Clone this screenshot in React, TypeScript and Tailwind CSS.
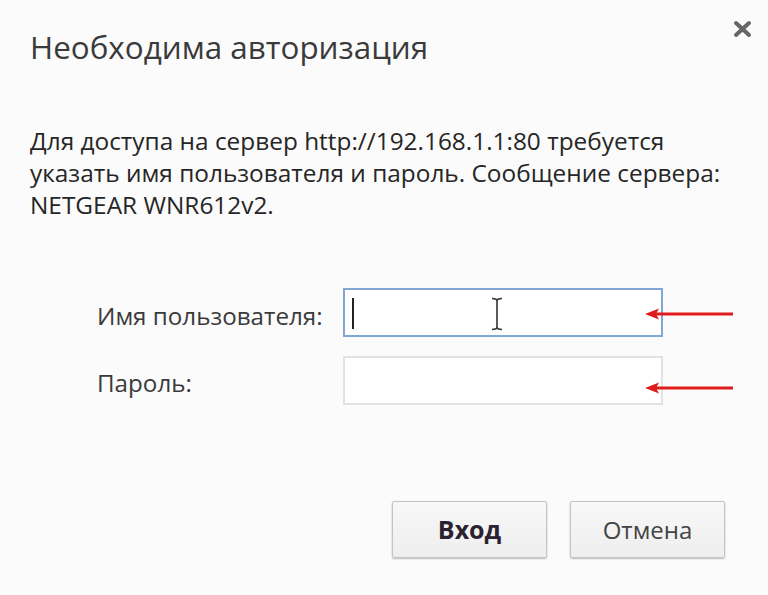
import React from "react";

function Arrow() {
  return (
    <svg width="90" height="14" viewBox="0 0 90 14" className="block">
      <line x1="10" y1="7" x2="88" y2="7" stroke="#e01b1b" strokeWidth="3" />
      <polygon points="0,7 14,1.5 11,7 14,12.5" fill="#e01b1b" />
    </svg>
  );
}

export default function App() {
  return (
    <div
      className="relative w-[768px] h-[595px] bg-[#fbfbfb] text-[#333] overflow-hidden"
      style={{ fontFamily: '"Open Sans", "Noto Sans", sans-serif' }}
    >
      <div className="absolute left-[733px] top-[20px]">
        <svg width="19" height="18" viewBox="0 0 19 18">
          <path d="M3 3 L16 15 M16 3 L3 15" stroke="#666" strokeWidth="4" strokeLinecap="round" />
        </svg>
      </div>

      <div className="pl-[30px] pt-[29px]">
        <h1 className="text-[31.4px] leading-[36px] text-[#3a3a3a] whitespace-nowrap">Необходима авторизация</h1>

        <p className="mt-[60px] text-[24.4px] leading-[32px] text-[#262626] w-[730px] whitespace-nowrap">
          Для доступа на сервер http://192.168.1.1:80 требуется
          <br />
          указать имя пользователя и пароль. Сообщение сервера:
          <br />
          NETGEAR WNR612v2.
        </p>

        <div className="mt-[67px] ml-[67px] flex flex-col gap-[19px]">
          <div className="flex items-center h-[49px]">
            <span className="w-[246px] text-[24.2px] leading-[32px] mt-[6px] text-[#3a3a3a] whitespace-nowrap">Имя пользователя:</span>
            <div className="relative w-[320px] h-[49px] border-2 border-[#82a6d6] bg-white shrink-0">
              <div className="absolute left-[7px] top-[8px] w-[2px] h-[31px] bg-[#222]" />
              <div className="absolute left-[146px] top-[7px] text-[#333]">
                <svg width="12" height="34" viewBox="0 0 12 34">
                  <path d="M1 1.5 Q6 1.5 6 4 L6 30 Q6 32.5 11 32.5 M11 1.5 Q6 1.5 6 4 M6 30 Q6 32.5 1 32.5" stroke="#333" strokeWidth="1.6" fill="none" />
                </svg>
              </div>
            </div>
            <div className="ml-[-18px] relative mt-[3px]">
              <Arrow />
            </div>
          </div>
          <div className="flex items-center h-[49px]">
            <span className="w-[246px] text-[24.2px] leading-[32px] mt-[4px] text-[#3a3a3a] whitespace-nowrap">Пароль:</span>
            <div className="w-[320px] h-[49px] border-2 border-[#e2e2e2] bg-white shrink-0" />
            <div className="ml-[-18px] relative mt-[14px]">
              <Arrow />
            </div>
          </div>
        </div>
      </div>

      <div className="absolute left-0 right-0 top-[501px] flex justify-end pr-[43px] gap-[23px]">
        <button className="w-[155px] h-[57px] border border-[#c4c4c4] rounded-[2px] bg-gradient-to-b from-[#f8f8f8] to-[#eeeeee] shadow-[0_1px_2px_rgba(0,0,0,0.25)] text-[25px] font-bold text-[#2a2230]">
          Вход
        </button>
        <button className="w-[155px] h-[57px] border border-[#c4c4c4] rounded-[2px] bg-gradient-to-b from-[#f8f8f8] to-[#eeeeee] shadow-[0_1px_2px_rgba(0,0,0,0.25)] text-[24px] text-[#444]">
          Отмена
        </button>
      </div>
    </div>
  );
}
